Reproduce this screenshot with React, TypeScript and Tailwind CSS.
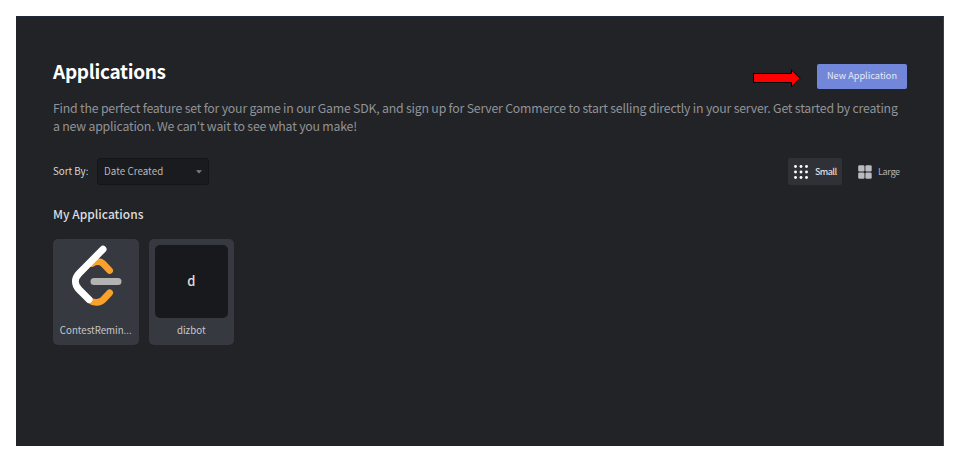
import React from "react";

const dots = [1.5, 7, 12.5];

function SmallGridIcon() {
  return (
    <svg width="14" height="14" viewBox="0 0 14 14" className="shrink-0 fill-white">
      {dots.map((y) => dots.map((x) => <circle key={`${x}-${y}`} cx={x} cy={y} r="1.45" />))}
    </svg>
  );
}

function LargeGridIcon() {
  return (
    <svg width="14" height="14" viewBox="0 0 14 14" className="shrink-0 fill-[#b9bbbe]">
      <rect x="0.2" y="0.2" width="6.3" height="6.3" rx="1.3" />
      <rect x="7.4" y="0.2" width="6.3" height="6.3" rx="1.3" />
      <rect x="0.2" y="7.4" width="6.3" height="6.3" rx="1.3" />
      <rect x="7.4" y="7.4" width="6.3" height="6.3" rx="1.3" />
    </svg>
  );
}

function PointerArrow() {
  return (
    <svg width="50" height="20" viewBox="0 0 50 20" className="mt-[5px] shrink-0">
      <path d="M1.500 5.500H39.500V1.800L48 10.300L39.500 18.800V14.500H1.500Z" fill="#ff0000" stroke="#000" strokeWidth="1" />
    </svg>
  );
}

function CodeLogo() {
  return (
    <svg width="72" height="72" viewBox="0 0 72 72" fill="none" strokeLinecap="round" strokeLinejoin="round">
      <path d="M32 18.500C36.500 16 40.500 16 43.500 19L49.600 25.500" stroke="#f9a12b" strokeWidth="6.800" />
      <path d="M29.500 55C33.500 58.300 39.500 58.300 43.500 54.300L49.600 47.800" stroke="#f9a12b" strokeWidth="6.800" />
      <path d="M34 36.500H58" stroke="#b3b3b3" strokeWidth="7" />
      <path d="M43 4.200L19 28.500C14.300 33.300 14.300 39.700 19 44.500L29 54.500" stroke="#fff" strokeWidth="7" />
    </svg>
  );
}

export default function App() {
  return (
    <div className="h-[450px] w-[960px] bg-white px-4 pt-4 font-['Noto_Sans_CJK_SC','Noto_Sans',sans-serif]">
      <main className="h-[430px] border-t border-r border-t-[#1d2839] border-r-[#3d3f44] bg-[#222327] pt-[46px] pr-[36px] pl-[37px]">
        <header className="flex h-[26px] items-start justify-between">
          <h1 className="-mt-[7px] text-[19px] leading-[30px] font-bold tracking-[-0.3px] whitespace-nowrap text-white">Applications</h1>
          <div className="flex items-start gap-[15px]">
            <PointerArrow />
            <button className="mt-px h-[25px] w-[90px] rounded-[2px] bg-[#7387da] pb-[2px] text-[9.200px] leading-[23px] whitespace-nowrap text-[#e6e9f8]">New Application</button>
          </div>
        </header>
        <p className="mt-[10px] text-[12.300px] leading-[18px] tracking-[-0.2px] whitespace-nowrap text-[#919396]">
          Find the perfect feature set for your game in our Game SDK, and sign up for Server Commerce to start selling directly in your server. Get started by creating
          <br />
          a new application. We can't wait to see what you make!
        </p>
        <div className="mt-[23px] flex h-[27px] items-center justify-between text-[9.750px]">
          <div className="flex items-center">
            <span className="w-[44px] pb-px whitespace-nowrap text-[#d6d7d9]">Sort By:</span>
            <div className="flex h-[27px] w-[112px] items-center justify-between rounded-[3px] border border-[#141518] bg-[#1a1b1e] pr-[6px] pl-[6px] text-[#b5b7ba]">
              <span className="pb-px tracking-[0.05px]">Date Created</span>
              <svg width="6" height="4" viewBox="0 0 6 4" className="fill-[#7d7f83]"><path d="M0 .3H6L3 3.500Z" /></svg>
            </div>
          </div>
          <div className="flex gap-[9px]">
            <div className="flex h-[27px] w-[54px] items-center gap-[7px] rounded-[2px] bg-[#2f3136] pl-[6px] text-[9px] font-medium tracking-[-0.6px] text-[#dcddde]"><SmallGridIcon />Small</div>
            <div className="flex h-[27px] w-[56px] items-center gap-[6px] pl-[7px] text-[9.200px] tracking-[-0.4px] text-[#b0b2b5]"><LargeGridIcon />Large</div>
          </div>
        </div>
        <h2 className="mt-[19px] text-[12px] leading-[20px] font-medium text-[#dcddde]">My Applications</h2>
        <div className="mt-[14.500px] flex gap-[10px] text-[9.700px] text-[#c7c8ca]">
          <article className="flex h-[106px] w-[85.500px] flex-col items-center rounded-[5px] bg-[#36393f] pt-[6px]">
            <CodeLogo />
            <span className="mt-[6px] leading-[14px] whitespace-nowrap">ContestRemin...</span>
          </article>
          <article className="flex h-[106px] w-[85.500px] flex-col items-center rounded-[5px] bg-[#36393f] pt-[6px]">
            <div className="flex h-[73px] w-[73px] items-center justify-center rounded-[5px] bg-[#18191c] text-[13px] font-medium text-[#dcddde]">d</div>
            <span className="mt-[5px] leading-[14px]">dizbot</span>
          </article>
        </div>
      </main>
    </div>
  );
}
